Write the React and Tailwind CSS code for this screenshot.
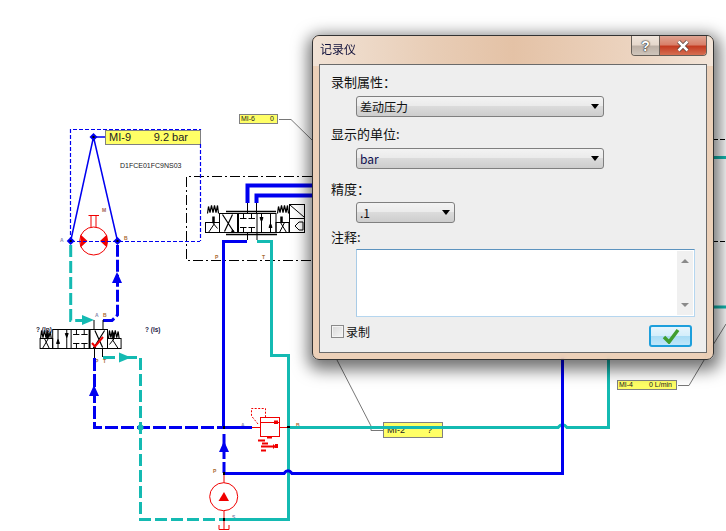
import React from "react";

const BLUE = "#0000f0", TEAL = "#14bab2", RED = "#f00000";
const CJK = "font-['Noto_Sans_CJK_SC','Noto_Sans',sans-serif]";

function Tri({ x, y, dir = "up", c }) {
  const p = dir === "up" ? `${x - 5},${y + 5} ${x},${y - 6} ${x + 5},${y + 5}` : `${x - 6},${y - 5} ${x + 6},${y} ${x - 6},${y + 5}`;
  return <polygon points={p} fill={c} />;
}

function Spring({ x, y }) {
  return <path d={`M${x} ${y + 8}l1 -7 1.5 6 1.5 -7 1.5 7 1.5 -7 1.5 7 1.5 -7 1 8`} fill="none" stroke="#000" strokeWidth="1.2" />;
}

function Valve({ transform, springY }) {
  return (
    <g transform={transform} fill="none" stroke="#000" strokeWidth="1">
      <rect x="0" y="0" width="56.5" height="19" />
      <path d="M18.5 0V19M37.5 0V19" />
      <path d="M18.5 0V19" strokeWidth="2" />
      <path d="M3 1L14 18M13 1L5 18" strokeWidth="1.2" />
      <path d="M13 16l2 3-3 0z" fill="#000" />
      <path d="M24 0V5M20.5 5H27M32 0V5M29 5H35.5M24 19V14M20.5 14H27M32 19V14M29 14H35.5" />
      <path d="M42 0V19M51 0V19" />
      <path d="M40.5 4h3l-1.5 4zM49.5 14h3l-1.5 -4z" fill="#000" />
      <rect x="-14" y="9" width="14" height="10" />
      <path d="M-11 19L-5 10M-7 9L-2 15" />
      <rect x="56.500" y="9" width="13" height="10" />
      <path d="M60 19L65 9M61 9L67 19" />
      <path d="M-6 3V9M62 3V9" strokeWidth="2.500" />
      <Spring x={-12} y={springY} />
      <Spring x={58} y={springY} />
    </g>
  );
}

function Diagram() {
  const d3 = { fill: "none", strokeWidth: 3 };
  return (
    <svg className="absolute left-0 top-0 z-10" width="726" height="531" viewBox="0 0 726 531">
      <g fill="none" strokeWidth="1">
        <path d="M312 176.500H186.500V260.500H312" stroke="#000" strokeDasharray="10 3 2 3" />
        <path d="M200.500 144V241M70.500 241V129.500H200.500V130" stroke={BLUE} strokeWidth="1.200" strokeDasharray="4 2" />
        <path d="M713 139.500H726M713 241.500H726" stroke="#000" strokeDasharray="5 2" />
        <path d="M279 119.500H291L312 140" stroke="#777" />
        <path d="M337 360L371 426V430.500H383" stroke="#777" />
        <path d="M678 385.500H689L713 345M713 345L726 324" stroke="#777" />
      </g>

      {/* motor */}
      <circle cx="93.700" cy="241" r="14" fill="#fff" stroke={RED} />
      <path d="M91 227V216M96 227V216M88.500 215.500H99" fill="none" stroke={RED} />
      <path d="M80.500 234.500L87.500 241L80.500 247.500zM107 234.500L100 241L107 247.500z" fill={RED} />

      {/* MI-9 triangle */}
      <path d="M93.500 137L70.700 241M93.500 137L117.500 241M93.500 137H105" fill="none" stroke={BLUE} strokeWidth="1.500" />
      <path d="M71 241.500H200" fill="none" stroke={BLUE} strokeWidth="1.200" strokeDasharray="4 2" />
      {[[93.500, 137], [70.700, 241], [117.500, 241]].map(([x, y]) => (
        <g key={x}>
          <polygon points={`${x},${y - 4} ${x + 4},${y} ${x},${y + 4} ${x - 4},${y}`} fill={BLUE} />
          <rect x={x - 1} y={y - 1} width="2" height="2" fill="#000" />
        </g>
      ))}

      {/* upper valve pipes */}
      <path d="M247.500 203V185.500H312M256.500 203V195.500H312" fill="none" stroke={BLUE} strokeWidth="4" />
      <path d="M247.500 203V213M256.500 203V213M247.500 232V240M257 232V240" fill="none" stroke="#000" />
      <path d="M247 241.500H223.500V427" {...d3} stroke={BLUE} />
      <path d="M257 241.500H271.500V355.500H288.500V519.500H223" {...d3} stroke={TEAL} />

      <path d="M226 211.500H276M226 234.500H277" stroke="#000" strokeWidth="1.500" />
      <Valve transform="translate(219.500,213.500)" springY={-8} />
      <rect x="289.500" y="204.500" width="15" height="28" fill="#fff" stroke="#000" />
      <path d="M289.500 218.500H304.500M290 205L304 217M295 226l4 -4h4v8h-4z" fill="none" stroke="#000" />

      {/* right side pipes */}
      <path d="M713 157.500H726M713 307H726" {...d3} stroke={TEAL} />
      <path d="M224 473.500H284Q288 468 292 473.500H562.500V358" {...d3} stroke={BLUE} />
      <path d="M288 427.500H558Q562.500 422 567 427.500H608.500V358" {...d3} stroke={TEAL} />
      <path d="M562.500 428V420" {...d3} stroke={BLUE} />

      {/* dashed circuit left */}
      <path d="M70.700 245V320.500H88" {...d3} stroke={TEAL} strokeDasharray="12 4" />
      <Tri x={88} y={320} dir="right" c={TEAL} />
      <path d="M103 320.500H112L117.500 315V245" {...d3} stroke={BLUE} strokeDasharray="12 3" />
      <Tri x={117} y={278} c={BLUE} />
      <path d="M103 357.500H125M125 357.500H140.500V519.500H224" {...d3} stroke={TEAL} strokeDasharray="12 4" />
      <Tri x={125} y={357.500} dir="right" c={TEAL} />
      <path d="M94.500 358V427.500H223" {...d3} stroke={BLUE} strokeDasharray="13 3" />
      <Tri x={94} y={391} c={BLUE} />
      <circle cx="140.500" cy="427.500" r="3" fill={TEAL} />
      <path d="M223.500 427.500H252" {...d3} stroke={BLUE} />
      <path d="M224 473V432" {...d3} stroke={BLUE} strokeDasharray="11 3" />
      <Tri x={224} y={447} c={BLUE} />
      <path d="M94.500 349V358M102.500 349V357M103 320V329M94 320V329" fill="none" stroke="#000" />

      <Valve transform="translate(107.500,329.500) scale(-0.970,1)" springY={1} />
      <path d="M92 343L95 346.500L103 337" fill="none" stroke={RED} strokeWidth="2" />

      {/* relief valve */}
      <rect x="260.500" y="417.500" width="19" height="19" fill="#fff" stroke={RED} />
      <path d="M258 424L251.500 416V408.500H265.500V417" fill="none" stroke={RED} strokeDasharray="2 1.500" />
      <path d="M252 427.500H260M280 427.500H288M261 422.500H279" fill="none" stroke={RED} />
      <rect x="274" y="420.500" width="4" height="3.500" fill={RED} />
      <path d="M267 437.500h5M258 440.500h7M262 443.500h6M261 446.500h12M261 450.500h5" stroke={RED} strokeWidth="2" />
      <path d="M273 444l3 2.500 -3 2.500zM275 444h3v4h-3z" fill={RED} />

      {/* pump */}
      <path d="M224 474V483M224 511V519M224 519V529M219 525V529.500H229V525" fill="none" stroke={RED} />
      <circle cx="223.700" cy="496.700" r="14" fill="#fff" stroke={RED} />
      <polygon points="218.500,501 224,492 229,501" fill={RED} />
      <g fill="#000">
        <rect x="223" y="426" width="2" height="3" />
        <rect x="287" y="426" width="3" height="2" />
        <rect x="223" y="472" width="2" height="3" />
        <rect x="223" y="518" width="2" height="3" />
      </g>
    </svg>
  );
}

function Meter({ className, name, value }) {
  return (
    <div className={`absolute flex items-center justify-between border border-[#808080] bg-[#ffff66] font-['Liberation_Sans',sans-serif] text-[#222] ${className}`}>
      <span>{name}</span>
      <span>{value}</span>
    </div>
  );
}

function Tiny({ className, children, color = "text-[#a86a30]" }) {
  return <span className={`absolute font-['Liberation_Sans',sans-serif] text-[5px] leading-none font-bold ${color} ${className}`}>{children}</span>;
}

function Select({ width, children }) {
  return (
    <div className={`ml-[25px] flex h-[21px] ${width} items-center justify-between rounded-[3px] border border-[#7f7f7f] bg-[linear-gradient(#f3f3f3_0%,#ebebeb_45%,#dcdcdc_46%,#cdcdcd_100%)] pl-[3px] pr-[4px] text-[12px] leading-none text-[#111]`}>
      <span>{children}</span>
      <span className="h-0 w-0 border-x-[4px] border-t-[5px] border-x-transparent border-t-black" />
    </div>
  );
}

function Label({ children, className = "" }) {
  return <div className={`h-[18px] text-[13px] leading-[18px] text-[#111] ${className}`}>{children}</div>;
}

function Dialog() {
  return (
    <div className={`absolute left-[312px] top-[35px] z-20 flex h-[325px] w-[402px] flex-col rounded-[7px] border border-[#333] bg-[#e9c8ac]/85 px-[6px] pb-[6px] shadow-[1px_5px_16px_5px_rgba(0,0,0,0.55)] backdrop-blur-[2px] ${CJK}`}>
      <div className="pointer-events-none absolute inset-x-0 top-0 h-[30px] rounded-t-[7px] bg-[linear-gradient(90deg,#f1e2d5_0%,#e8cdb6_30%,#e4c2a6_50%,#ecd4c0_80%,#f2e4d8_100%)]" />
      <div className="absolute right-[6px] top-0 flex h-[20px] w-[76px] overflow-hidden rounded-b-[4px] border border-t-0 border-[#665f58]">
        <div className="flex w-[28px] items-center justify-center border-r border-[#6b625a] bg-[linear-gradient(#efe4da_0%,#e6d8cc_45%,#bdb0a5_55%,#cfc5bb_100%)] font-['Liberation_Sans',sans-serif] text-[14px] font-bold leading-none text-white [text-shadow:0_0_1px_#333,0_0_1px_#333,0_0_2px_#333]">?</div>
        <div className="flex flex-1 items-center justify-center bg-[linear-gradient(#dfa593_0%,#d9806a_45%,#c43c22_55%,#d66f52_100%)]">
          <svg width="14" height="12" viewBox="0 0 14 12">
            <path d="M2.500 1.500L11.500 10.500M11.500 1.500L2.500 10.500" stroke="#55423c" strokeWidth="4" />
            <path d="M2.500 1.500L11.500 10.500M11.500 1.500L2.500 10.500" stroke="#fff" strokeWidth="2.500" />
          </svg>
        </div>
      </div>
      <div className="relative flex h-[28px] shrink-0 items-start pl-[1px] pt-[7px] text-[12px] leading-none text-[#10103a]">记录仪</div>
      <div className="relative flex flex-1 flex-col border border-[#6a6a6a] bg-[#eeeeee] pl-[11px] pt-[8px]">
        <Label>录制属性：</Label>
        <Select width="w-[248px] mt-[5px]">差动压力</Select>
        <Label className="mt-[8px]">显示的单位:</Label>
        <Select width="w-[248px] mt-[5px]"><span className="text-[#101050]">bar</span></Select>
        <Label className="mt-[11px]">精度：</Label>
        <Select width="w-[99px] mt-[4px]">.1</Select>
        <Label className="mt-[5px]">注释:</Label>
        <div className="ml-[25px] mt-[3px] flex h-[68px] w-[339px] justify-end border border-[#b5d6ef] border-l-[#a8cbe6] border-t-[#5c93bf] bg-white py-[1px] pr-[1px]">
          <div className="flex w-[16px] flex-col items-center justify-between bg-[#f0f0f0] py-[8px]">
            <span className="h-0 w-0 border-x-[4px] border-b-[4px] border-x-transparent border-b-[#8a8a8a]" />
            <span className="h-0 w-0 border-x-[4px] border-t-[4px] border-x-transparent border-t-[#8a8a8a]" />
          </div>
        </div>
        <div className="mt-[8px] flex h-[22px] items-start justify-between pr-[14px]">
          <div className="flex items-center gap-[2px]">
            <span className="h-[13px] w-[13px] border border-[#8a8a8a] bg-[linear-gradient(135deg,#d8d8d8,#f6f6f6)] shadow-[inset_0_0_0_1px_#f4f4f4]" />
            <span className="text-[12px] leading-none text-[#111]">录制</span>
          </div>
          <div className="flex h-[22px] w-[43px] items-center justify-center rounded-[3px] border-2 border-[#1d9fdc] bg-[linear-gradient(#e6f5fd_0%,#d4eefb_48%,#a9dcf5_52%,#bfe6f9_100%)]">
            <svg width="18" height="16" viewBox="0 0 18 16">
              <path d="M2 9L7 14L16 2" fill="none" stroke="#3f9e2f" strokeWidth="3.500" />
            </svg>
          </div>
        </div>
      </div>
    </div>
  );
}

export default function App() {
  return (
    <div className="relative h-[531px] w-[726px] overflow-hidden bg-white">
      <Meter className="left-[105px] top-[130px] h-[15px] w-[96px] pl-[3px] pr-[12px] text-[11px]" name="MI-9" value="9.2 bar" />
      <Meter className="left-[239px] top-[114px] h-[10px] w-[39px] pl-[1px] pr-[3px] text-[7px]" name="MI-6" value="0" />
      <Meter className="left-[383px] top-[422px] h-[16px] w-[60px] pl-[3px] pr-[10px] pt-[2px] text-[9px]" name="MI-2" value="?" />
      <Meter className="left-[617px] top-[380px] h-[10px] w-[60px] pl-[1px] pr-[4px] text-[7px]" name="MI-4" value="0 L/min" />
      <Diagram />
      <span className="absolute left-[120px] top-[162px] font-['Liberation_Sans',sans-serif] text-[7px] leading-[8px] text-[#222]">D1FCE01FC9NS03</span>
      <span className="absolute left-[36px] top-[326px] z-30 font-['Liberation_Sans',sans-serif] text-[6.500px] font-bold leading-[8px] text-[#223]">? (lp)</span>
      <span className="absolute left-[145px] top-[326px] font-['Liberation_Sans',sans-serif] text-[6.500px] font-bold leading-[8px] text-[#224]">? (ls)</span>
      <Tiny className="left-[102px] top-[208px]" color="text-[#a06050]">M</Tiny>
      <Tiny className="left-[60px] top-[238px]" color="text-[#8888aa]">A</Tiny>
      <Tiny className="left-[124px] top-[236px]">B</Tiny>
      <Tiny className="left-[215px] top-[255px]">P</Tiny>
      <Tiny className="left-[262px] top-[255px]">T</Tiny>
      <Tiny className="left-[95px] top-[313px]" color="text-[#8888aa]">A</Tiny>
      <Tiny className="left-[103px] top-[313px]">B</Tiny>
      <Tiny className="left-[95px] top-[359px]">P</Tiny>
      <Tiny className="left-[103px] top-[359px]">T</Tiny>
      <Tiny className="left-[241px] top-[423px]" color="text-[#8888aa]">A</Tiny>
      <Tiny className="left-[296px] top-[423px]">B</Tiny>
      <Tiny className="left-[213px] top-[469px]">P</Tiny>
      <Tiny className="left-[232px] top-[515px]" color="text-[#8888aa]">S</Tiny>
      <Dialog />
    </div>
  );
}
